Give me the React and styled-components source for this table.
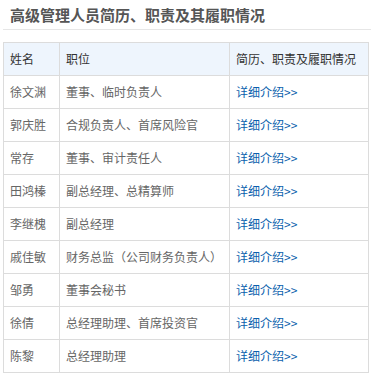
import React from 'react';
import styled, { createGlobalStyle } from 'styled-components';

const GlobalStyle = createGlobalStyle`
  body {
    margin: 0;
    background: #fff;
    font-family: "Noto Sans CJK SC", "Microsoft YaHei", sans-serif;
  }
`

const Wrapper = styled.div`
  width: 371px;
  padding-left: 3px;
  box-sizing: border-box;
`

const Title = styled.h2`
  margin: 0;
  height: 30px;
  padding: 5px 0 0 7px;
  box-sizing: border-box;
  font-size: 15px;
  line-height: 20px;
  font-weight: bold;
  color: #555;
  border-bottom: 1px solid #e6e6e6;
`

const Table = styled.table`
  margin-top: 12px;
  width: 365px;
  border-collapse: collapse;
  table-layout: fixed;
  font-size: 12px;
  color: #666;
`

const HeadRow = styled.tr`
  background: #eef5fd;
  color: #333;
`

const Cell = styled.td`
  height: 32px;
  padding: 0 6px;
  border: 1px solid #dcdcdc;
  vertical-align: middle;
  white-space: nowrap;
  line-height: 16px;
`

const Link = styled.a`
  color: #0b5fad;
  text-decoration: none;
`

const rows = [
  ['徐文渊', '董事、临时负责人'],
  ['郭庆胜', '合规负责人、首席风险官'],
  ['常存', '董事、审计责任人'],
  ['田鸿榛', '副总经理、总精算师'],
  ['李继槐', '副总经理'],
  ['戚佳敏', '财务总监（公司财务负责人）'],
  ['邹勇', '董事会秘书'],
  ['徐倩', '总经理助理、首席投资官'],
  ['陈黎', '总经理助理'],
]

export default function App() {
  return (
    <Wrapper>
      <GlobalStyle />
      <Title>高级管理人员简历、职责及其履职情况</Title>
      <Table>
        <colgroup>
          <col style={{ width: 56 }} />
          <col style={{ width: 170 }} />
          <col style={{ width: 139 }} />
        </colgroup>
        <tbody>
          <HeadRow>
            <Cell>姓名</Cell>
            <Cell>职位</Cell>
            <Cell>简历、职责及履职情况</Cell>
          </HeadRow>
          {rows.map(([name, post]) => (
            <tr key={name}>
              <Cell>{name}</Cell>
              <Cell>{post}</Cell>
              <Cell><Link href="#">详细介绍&gt;&gt;</Link></Cell>
            </tr>
          ))}
        </tbody>
      </Table>
    </Wrapper>
  );
}
